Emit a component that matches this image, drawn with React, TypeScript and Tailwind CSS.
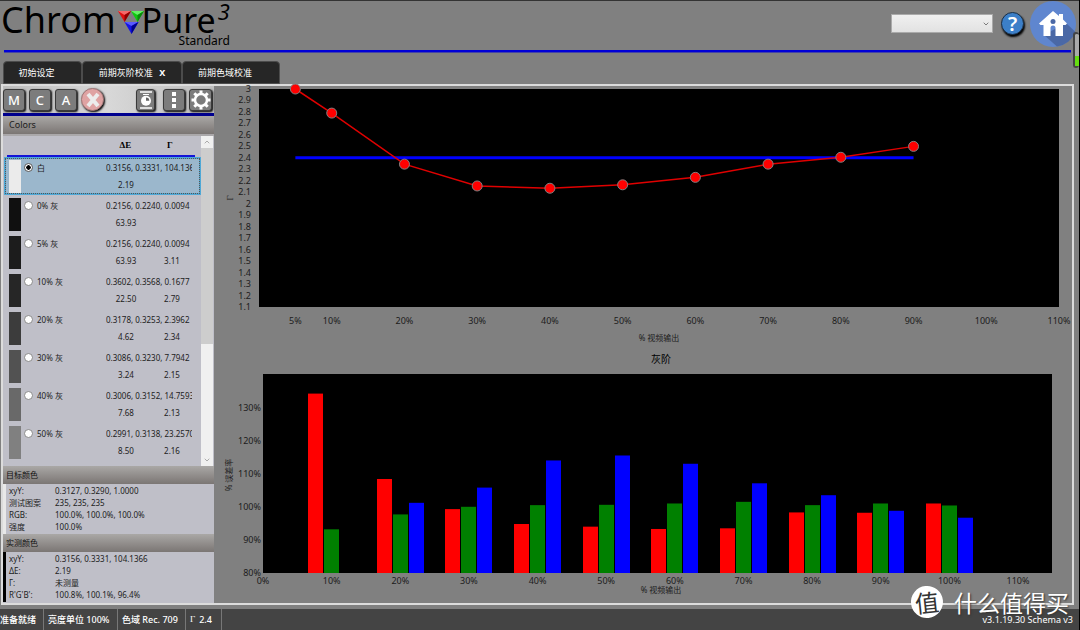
import React, { useState } from "react";
import { ChevronDown, ChevronUp } from "lucide-react";
import { clsx } from "clsx";

const PATCHES = [
  { name: "白", xyY: "0.3156, 0.3331, 104.1366", deltaE: "2.19", gamma: "", swatch: "bg-[#ebebeb]" },
  { name: "0% 灰", xyY: "0.2156, 0.2240, 0.0094", deltaE: "63.93", gamma: "", swatch: "bg-[#101010]" },
  { name: "5% 灰", xyY: "0.2156, 0.2240, 0.0094", deltaE: "63.93", gamma: "3.11", swatch: "bg-[#1c1c1c]" },
  { name: "10% 灰", xyY: "0.3602, 0.3568, 0.1677", deltaE: "22.50", gamma: "2.79", swatch: "bg-[#262626]" },
  { name: "20% 灰", xyY: "0.3178, 0.3253, 2.3962", deltaE: "4.62", gamma: "2.34", swatch: "bg-[#3c3c3c]" },
  { name: "30% 灰", xyY: "0.3086, 0.3230, 7.7942", deltaE: "3.24", gamma: "2.15", swatch: "bg-[#525252]" },
  { name: "40% 灰", xyY: "0.3006, 0.3152, 14.7593", deltaE: "7.68", gamma: "2.13", swatch: "bg-[#696969]" },
  { name: "50% 灰", xyY: "0.2991, 0.3138, 23.2570", deltaE: "8.50", gamma: "2.16", swatch: "bg-[#808080]" },
];

const TARGET = [
  ["xyY:", "0.3127, 0.3290, 1.0000"],
  ["测试图案", "235, 235, 235"],
  ["RGB:", "100.0%, 100.0%, 100.0%"],
  ["强度", "100.0%"],
];

const MEASURED = [
  ["xyY:", "0.3156, 0.3331, 104.1366"],
  ["ΔE:", "2.19"],
  ["Γ:", "未测量"],
  ["R'G'B':", "100.8%, 100.1%, 96.4%"],
];

const GAMMA_POINTS = [
  [5, 3],
  [10, 2.79],
  [20, 2.345],
  [30, 2.155],
  [40, 2.135],
  [50, 2.165],
  [60, 2.23],
  [70, 2.345],
  [80, 2.405],
  [90, 2.5],
];

// [level, red, green, blue]
const RGB_LEVELS = [
  [10, 134.2, 93.2, 80],
  [20, 108.4, 97.7, 101.2],
  [30, 99.3, 100, 105.8],
  [40, 94.8, 100.5, 114],
  [50, 94, 100.6, 115.5],
  [60, 93.3, 101, 113],
  [70, 93.5, 101.5, 107.1],
  [80, 98.3, 100.5, 103.5],
  [90, 98.2, 101, 98.8],
  [100, 101, 100.4, 96.7],
];

function Logo() {
  return (
    <h1 className="flex items-start text-4xl leading-[38px] text-black">
      <span>Chrom</span>
      <svg className="mt-[10px] ml-[2px] h-6 w-7" viewBox="0 0 28 24" aria-hidden="true">
        <path d="M0 0h13l-6.500 11z" fill="#e01010" />
        <path d="M0 0h13l-6.500 4z" fill="#f46a6a" />
        <path d="M13 0l-6.500 11V4z" fill="#8c0000" />
        <path d="M13 0h13l-6.500 11z" fill="#10c810" />
        <path d="M13 0h13l-6.500 4z" fill="#66f066" />
        <path d="M26 0l-6.500 11V4z" fill="#0a8a0a" />
        <path d="M6.500 11h14l-7 12z" fill="#1414e6" />
        <path d="M6.500 11h14l-7 4z" fill="#5a5aff" />
        <path d="M20.500 11l-7 12v-8z" fill="#00008c" />
      </svg>
      <span className="-ml-1 flex flex-col items-end">
        <span className="flex items-start">
          <span className="text-[34px] leading-[38px]">Pure</span>
          <span className="ml-[2px] text-[22px] leading-5 italic">3</span>
        </span>
        <span className="-mt-1 text-xs leading-3">Standard</span>
      </span>
    </h1>
  );
}

function HomeIcon() {
  return (
    <svg className="size-[46px]" viewBox="0 0 46 46" aria-hidden="true">
      <circle cx="23" cy="23" r="23" fill="#5f86cf" />
      <path d="M36 22l9.500 9A23 23 0 0 1 27 45.500L14 34z" fill="#4a68a6" />
      <path
        d="M23 10l6 5v-2h4v5.500l4 4-1.500 1.500H33v11h-7.500v-8a2.500 2.500 0 0 0-5 0v8H13.500V24h-3L9 22.500z"
        fill="#fff"
      />
      <circle cx="23" cy="20.500" r="2.500" fill="#4a68a6" />
    </svg>
  );
}

function Header() {
  return (
    <header className="border-t border-[#333]">
      <div className="flex h-[49px] justify-between pl-px">
        <Logo />
        <div className="flex items-start pr-[3px]">
          <div className="relative mt-[13px]">
            <select
              aria-label="Profile"
              className="block h-[19px] w-[102px] appearance-none border border-[#aaa] bg-linear-to-b from-[#f0f0f0] to-[#e2e2e2]"
            />
            <ChevronDown className="pointer-events-none absolute top-[6px] right-[3px] size-2 text-[#444]" />
          </div>
          <button
            aria-label="Help"
            className="mt-[11px] ml-2 flex size-[23px] items-center justify-center rounded-full border border-[#1c2f44] bg-[#3c7fc8] text-xl leading-5 font-semibold text-white shadow-[1px_2px_2px_#000]"
          >
            ?
          </button>
          <button aria-label="Home" className="ml-[6px]">
            <HomeIcon />
          </button>
        </div>
      </div>
      <div className="mr-2 ml-1 h-[3px] border-b border-[#4444a8] bg-[#0000d8]" />
    </header>
  );
}

function Tabs() {
  const tab = "h-[23px] rounded-t-sm border border-[#4c4c4c] bg-[#262626]";
  return (
    <nav role="tablist" className="mt-2 flex items-end pl-[3px] text-[9px] leading-3 text-white">
      <button role="tab" aria-selected="false" className={clsx(tab, "w-[79px] pr-3")}>
        初始设定
      </button>
      <button role="tab" aria-selected="true" className={clsx(tab, "w-[100px]")}>
        前期灰阶校准 <b className="ml-1">X</b>
      </button>
      <button role="tab" aria-selected="false" className={clsx(tab, "w-[98px] pr-3")}>
        前期色域校准
      </button>
    </nav>
  );
}

function ToolButton({
  label,
  className,
  children,
}: {
  label: string;
  className?: string;
  children: React.ReactNode;
}) {
  return (
    <button
      aria-label={label}
      className={clsx(
        "flex h-[22px] items-center justify-center rounded-[3px] border border-[#3a3a3a] bg-[#7c7c7c] text-[13px] leading-4 font-medium text-white shadow-[1px_1px_2px_#000]",
        className
      )}
    >
      {children}
    </button>
  );
}

function Toolbar() {
  return (
    <div className="flex h-[30px] items-center gap-1 border-b-[3px] border-[#00008f] bg-linear-to-r from-[#bdbdbd] via-[#d8d8d8] to-[#bdbdbd]">
      <ToolButton label="Manual" className="w-[22px]">M</ToolButton>
      <ToolButton label="Continuous" className="w-[22px]">C</ToolButton>
      <ToolButton label="Auto" className="w-[22px]">A</ToolButton>
      <button
        aria-label="Cancel"
        className="flex size-[23px] items-center justify-center rounded-full border border-[#a07878] bg-[#dfa3a3] shadow-[1px_1px_2px_#000]"
      >
        <svg className="size-4" viewBox="0 0 16 16" aria-hidden="true">
          <path d="M3 2l10 12M13 2L3 14" stroke="#ececec" strokeWidth="4" />
        </svg>
      </button>
      <ToolButton label="Report" className="ml-auto w-[19px]">
        <svg className="h-[18px] w-[14px]" viewBox="0 0 14 18" aria-hidden="true">
          <path d="M1 1h12M1 17h12" stroke="#fff" strokeWidth="1.500" />
          <path d="M4 3.500h6" stroke="#fff" strokeWidth="1" />
          <circle cx="7" cy="9.800" r="5" fill="#fff" />
          <path d="M7 9.800V6.500a3.300 3.300 0 0 1 3.300 3.300z" fill="#666" />
        </svg>
      </ToolButton>
      <ToolButton label="More" className="ml-1 w-[22px]">
        <svg className="h-4 w-1" viewBox="0 0 4 16" aria-hidden="true">
          <path d="M0 0h4v4H0zM0 6h4v4H0zM0 12h4v4H0z" fill="#fff" />
        </svg>
      </ToolButton>
      <ToolButton label="Settings" className="mr-[2px] w-[23px]">
        <svg className="size-5 shrink-0" viewBox="0 0 20 20" aria-hidden="true">
          <circle cx="10" cy="10" r="6" fill="none" stroke="#fff" strokeWidth="2.500" />
          <path
            d="M10 .5v3.500M10 16v3.500M.5 10H4M16 10h3.500M3.300 3.300l2.500 2.500M14.200 14.200l2.500 2.500M16.700 3.300l-2.500 2.500M5.800 14.200l-2.500 2.500"
            stroke="#fff"
            strokeWidth="3"
          />
        </svg>
      </ToolButton>
    </div>
  );
}

function SectionHeader({ children }: { children: React.ReactNode }) {
  return (
    <h2 className="h-[18px] bg-linear-to-b from-[#aaa8a6] to-[#7b7674] pl-[3px] leading-[18px] text-[#111]">
      {children}
    </h2>
  );
}

function PatchList() {
  const [selected, setSelected] = useState(0);
  return (
    <div className="flex h-[332px] border-t-2 border-[#aaa8aa] bg-[#bfbfc8]">
      <div className="min-w-0 flex-1 pl-px">
        <div className="mr-[6px] ml-[3px] flex h-[21px] items-center border-b-2 border-[#1414d8] pt-px pl-[99px] font-['Liberation_Serif',serif] text-[9px] font-bold text-black">
          <span className="w-10 text-center">ΔE</span>
          <span className="w-[52px] text-center">Γ</span>
        </div>
        <div role="radiogroup" aria-label="Colors">
          {PATCHES.map((patch, i) => (
            <label
              key={patch.name}
              className={clsx(
                "flex h-[38px] items-start border-2 pt-px pl-[3px]",
                i === selected
                  ? "border-[#4fa8d6] bg-[#9bb7cc] outline-1 -outline-offset-2 outline-dotted outline-[#555]"
                  : "border-transparent"
              )}
            >
              <span className={clsx("h-[33px] w-3 shrink-0", patch.swatch)} />
              <input
                type="radio"
                name="patch"
                checked={i === selected}
                onChange={() => setSelected(i)}
                className="mt-[3px] ml-[3px] size-[9px] shrink-0 appearance-none rounded-full border border-[#8a8a8a] bg-white checked:border-[#555] checked:bg-[radial-gradient(circle,#000_40%,#fff_50%)]"
              />
              <span className="ml-1 w-[69px] shrink-0 leading-4">{patch.name}</span>
              <span className="min-w-0 flex-1">
                <span className="block w-[86px] overflow-hidden leading-4 whitespace-nowrap">{patch.xyY}</span>
                <span className="flex leading-[18px]">
                  <span className="w-10 text-center">{patch.deltaE}</span>
                  <span className="w-[52px] text-center">{patch.gamma}</span>
                </span>
              </span>
            </label>
          ))}
        </div>
      </div>
      <div className="mr-px flex w-3 flex-col bg-[#f0f0f0] text-[#888]">
        <button aria-label="Scroll up" className="flex h-3 items-center justify-center">
          <ChevronUp className="size-2" />
        </button>
        <div className="h-[196px] bg-[#cdcdcd]" />
        <button aria-label="Scroll down" className="mt-auto flex h-3 items-center justify-center">
          <ChevronDown className="size-2" />
        </button>
      </div>
    </div>
  );
}

function Readout({ rows, className }: { rows: string[][]; className?: string }) {
  return (
    <div className={clsx("h-[50px] border-l-[3px] bg-[#bfbfc8] pt-px", className)}>
      <table className="w-full text-left">
        <tbody>
          {rows.map(([label, value]) => (
            <tr key={label} className="leading-3">
              <th className="w-[49px] pl-[3px] font-normal">{label}</th>
              <td>{value}</td>
            </tr>
          ))}
        </tbody>
      </table>
    </div>
  );
}

function Sidebar() {
  return (
    <aside className="w-[211px] shrink-0 bg-[#bfbfc8] text-[8px] text-[#1c1c1c]">
      <Toolbar />
      <h2 className="h-[18px] bg-linear-to-b from-[#aaa8a6] to-[#7b7674] pl-[6px] text-[9px] leading-[18px]">
        Colors
      </h2>
      <PatchList />
      <SectionHeader>目标颜色</SectionHeader>
      <Readout rows={TARGET} className="border-[#e8e8e8]" />
      <SectionHeader>实测颜色</SectionHeader>
      <Readout rows={MEASURED} className="border-black" />
    </aside>
  );
}

function GammaChart() {
  const x = (level: number) => 45 + (level * 800) / 110;
  const y = (gamma: number) => 3 + ((3 - gamma) * 218) / 1.9;
  const gammaTicks = Array.from({ length: 20 }, (_, i) => (30 - i) / 10);
  const levels = [5, 10, 20, 30, 40, 50, 60, 70, 80, 90, 100, 110];

  return (
    <svg className="block w-full overflow-visible text-[9px]" viewBox="0 0 858 260" fill="#1c1c1c">
      <rect x="45" y="3" width="800" height="218" fill="#000" />
      {gammaTicks.map((tick) => (
        <text key={tick} x="37" y={y(tick) + 3} textAnchor="end">
          {tick}
        </text>
      ))}
      {levels.map((level) => (
        <text key={level} x={x(level)} y="238" textAnchor="middle">
          {level}%
        </text>
      ))}
      <text transform="translate(19 112) rotate(-90)" textAnchor="middle" className="font-['Liberation_Serif',serif]">
        Γ
      </text>
      <text x="445" y="255" textAnchor="middle" className="text-[8px]">
        % 视频输出
      </text>
      <path d={`M${x(5)} ${y(2.4)}H${x(90)}`} stroke="#00f" strokeWidth="3" />
      <polyline
        points={GAMMA_POINTS.map(([level, gamma]) => `${x(level)},${y(gamma)}`).join(" ")}
        fill="none"
        stroke="#e00000"
        strokeWidth="1.5"
      />
      {GAMMA_POINTS.map(([level, gamma]) => (
        <circle key={level} cx={x(level)} cy={y(gamma)} r="5" fill="#f00" stroke="#808080" />
      ))}
    </svg>
  );
}

function RgbChart() {
  const x = (level: number) => 49 + level * 6.864;
  const y = (percent: number) => 227 - (percent - 80) * 3.31;
  const fills = ["#f00", "#008000", "#00f"];

  return (
    <svg className="block w-full text-[9px]" viewBox="0 0 858 257" fill="#1c1c1c">
      <text x="447" y="17" textAnchor="middle" fill="#000" className="text-[10px]">
        灰阶
      </text>
      <rect x="49" y="28" width="789" height="199" fill="#000" />
      {[80, 90, 100, 110, 120, 130].map((tick) => (
        <text key={tick} x="47" y={y(tick) + 3} textAnchor="end">
          {tick}%
        </text>
      ))}
      {Array.from({ length: 12 }, (_, i) => i * 10).map((level) => (
        <text key={level} x={x(level)} y="238" textAnchor="middle">
          {level}%
        </text>
      ))}
      <text transform="translate(18 129) rotate(-90)" textAnchor="middle" className="text-[8px]">
        % 误差率
      </text>
      <text x="447" y="247" textAnchor="middle" className="text-[8px]">
        % 视频输出
      </text>
      {RGB_LEVELS.map(([level, ...channels]) =>
        channels.map((value, i) => (
          <rect
            key={`${level}-${i}`}
            x={Math.ceil(x(level)) - 24 + i * 16}
            y={y(value)}
            width="15"
            height={227 - y(value)}
            fill={fills[i]}
          />
        ))
      )}
    </svg>
  );
}

function StatusBar() {
  const cell = "flex items-center border-r border-[#777] px-1";
  return (
    <footer className="mt-1 flex h-[21px] bg-[#444] text-[9px] font-medium text-white">
      <span className={clsx(cell, "-ml-1 w-[48px]")}>准备就绪</span>
      <span className={clsx(cell, "w-[74px]")}>亮度单位 100%</span>
      <span className={clsx(cell, "w-[68px]")}>色域 Rec. 709</span>
      <span className={clsx(cell, "w-[36px] gap-1")}>
        <span className="font-['Liberation_Serif',serif]">Γ</span> 2.4
      </span>
      <span className="mr-[6px] ml-auto flex items-center font-normal">v3.1.19.30 Schema v3</span>
    </footer>
  );
}

function Watermark() {
  return (
    <div className="pointer-events-none absolute right-[10px] bottom-3 flex items-center gap-[11px] font-['Noto_Sans_CJK_SC',sans-serif] text-white">
      <span className="flex size-8 -rotate-6 items-center justify-center rounded-full bg-white text-2xl leading-6 text-[#333]">
        值
      </span>
      <span className="text-[23px] leading-8 [text-shadow:1px_1px_2px_#333]">什么值得买</span>
    </div>
  );
}

export default function App() {
  return (
    <div className="relative flex min-h-screen flex-col border-r border-black bg-[#808080] font-['Noto_Sans','Noto_Sans_CJK_SC',sans-serif]">
      <Header />
      <Tabs />
      <main className="mr-[5px] ml-px flex flex-1 border-2 border-[#dcdcdc]">
        <Sidebar />
        <section className="min-w-0 flex-1">
          <GammaChart />
          <RgbChart />
        </section>
      </main>
      <StatusBar />
      {/* signal level meter */}
      <div className="absolute top-8 right-0 flex h-9 w-[6px] items-end rounded-sm border-2 border-r-0 border-[#444] bg-[#aaa]">
        <div className="h-[10px] w-full bg-[#66dd11]" />
      </div>
      <Watermark />
    </div>
  );
}
